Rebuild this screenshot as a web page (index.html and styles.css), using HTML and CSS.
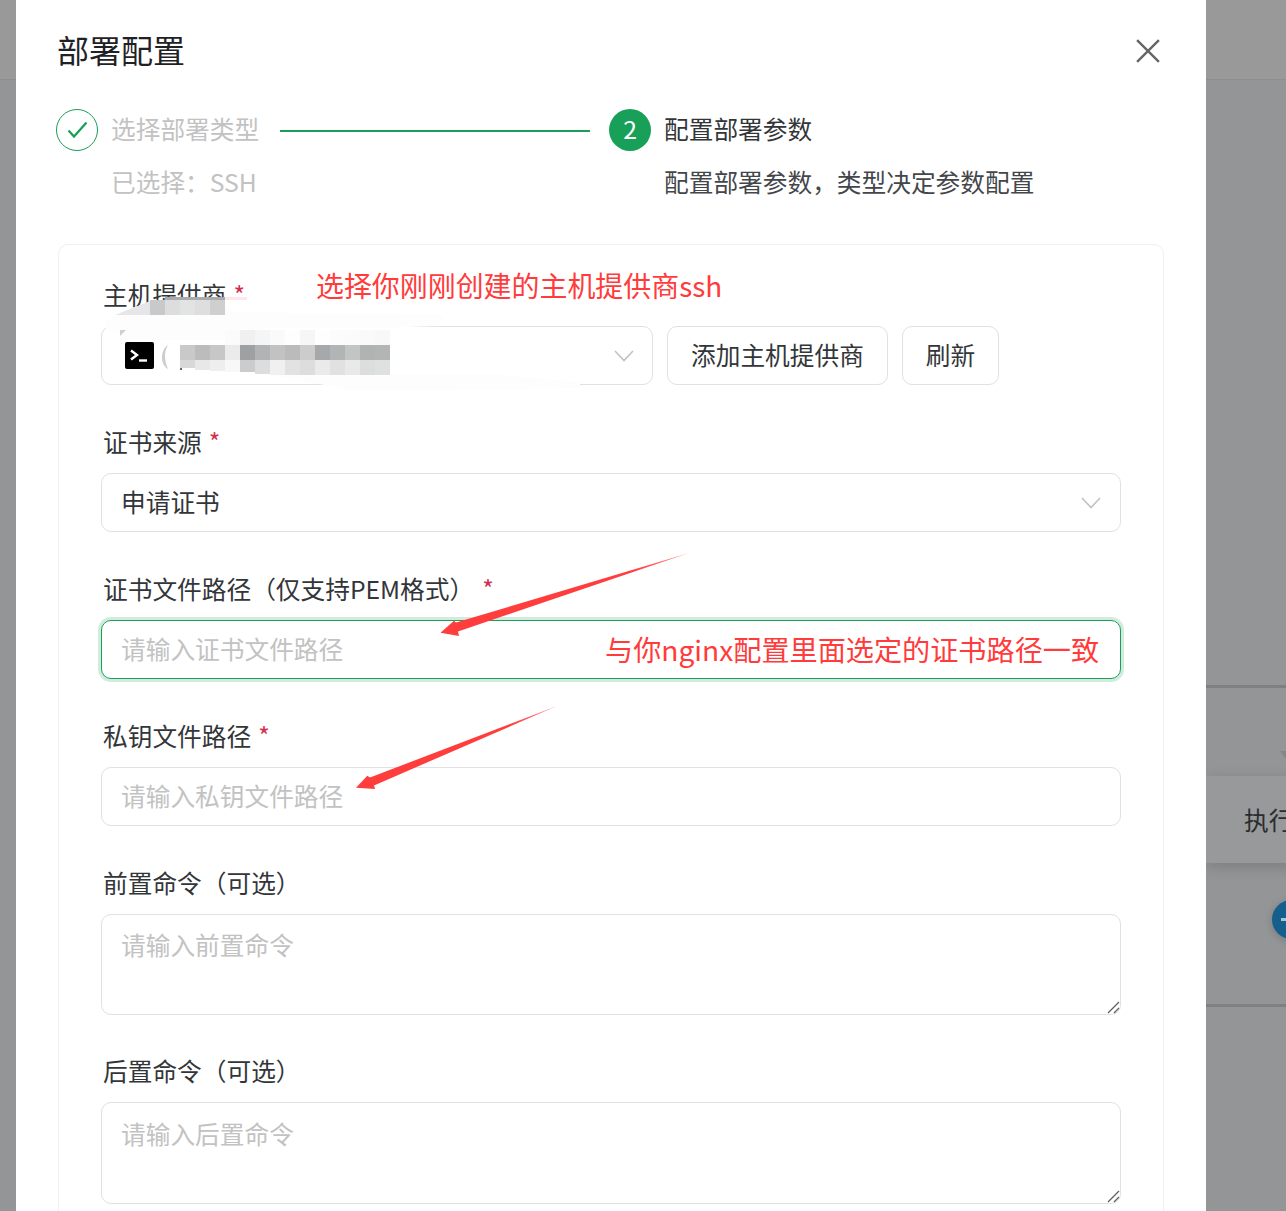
FILE: index.html
```html
<!DOCTYPE html>
<html lang="zh-CN">
<head>
<meta charset="utf-8">
<title>部署配置</title>
<link rel="stylesheet" href="styles.css">
</head>
<body>
<div class="stage">
  <div class="gutter"><div class="page-head"></div></div>

  <main class="modal">
    <header class="modal-head">
      <h1 class="modal-title">部署配置</h1>
      <svg class="close-icon" viewBox="0 0 22 22" aria-hidden="true"><path d="M1 1 21 21M21 1 1 21"/></svg>
    </header>

    <div class="steps">
      <section class="step step-done">
        <span class="step-dot step-dot-done">
          <svg viewBox="0 0 24 24" aria-hidden="true"><path d="M3.5 12.5 9 18.5 21.5 4.5"/></svg>
        </span>
        <div class="step-body">
          <div class="step-title-row">
            <span class="step-title">选择部署类型</span>
            <span class="step-line"></span>
          </div>
          <p class="step-desc">已选择：SSH</p>
        </div>
      </section>
      <section class="step step-current">
        <span class="step-dot step-dot-current">2</span>
        <div class="step-body">
          <div class="step-title-row"><span class="step-title">配置部署参数</span></div>
          <p class="step-desc">配置部署参数，类型决定参数配置</p>
        </div>
      </section>
    </div>

    <form class="form-card">
      <div class="field">
        <label class="field-label">主机提供商<span class="req">*</span></label>
        <div class="field-row">
          <div class="select select-provider">
            <svg class="term-icon" viewBox="0 0 29 27" aria-hidden="true"><rect width="29" height="27" rx="2" fill="#000"/><path d="M6 8.5 12 13 6 17.5" fill="none" stroke="#fff" stroke-width="2.4"/><path d="M14 18.5h8" stroke="#fff" stroke-width="2.4"/></svg>
            <svg class="chevron" viewBox="0 0 20 12" aria-hidden="true"><path d="M1 1 10 10.5 19 1"/></svg>
          </div>
          <button type="button" class="btn">添加主机提供商</button>
          <button type="button" class="btn">刷新</button>
        </div>
      </div>

      <div class="field">
        <label class="field-label">证书来源<span class="req">*</span></label>
        <div class="select">
          <span class="select-value">申请证书</span>
          <svg class="chevron" viewBox="0 0 20 12" aria-hidden="true"><path d="M1 1 10 10.5 19 1"/></svg>
        </div>
      </div>

      <div class="field">
        <label class="field-label">证书文件路径（仅支持PEM格式）<span class="req req-wide">*</span></label>
        <input class="input is-focus" placeholder="请输入证书文件路径">
      </div>

      <div class="field">
        <label class="field-label">私钥文件路径<span class="req">*</span></label>
        <input class="input" placeholder="请输入私钥文件路径">
      </div>

      <div class="field field-area">
        <label class="field-label">前置命令（可选）</label>
        <div class="area-box">
          <textarea class="input textarea" placeholder="请输入前置命令"></textarea>
          <svg class="grip" viewBox="0 0 13 13" aria-hidden="true"><path d="M1 12 12 1M7 12 12 7"/></svg>
        </div>
      </div>

      <div class="field field-area">
        <label class="field-label">后置命令（可选）</label>
        <div class="area-box">
          <textarea class="input textarea textarea-tall" placeholder="请输入后置命令"></textarea>
          <svg class="grip" viewBox="0 0 13 13" aria-hidden="true"><path d="M1 12 12 1M7 12 12 7"/></svg>
        </div>
      </div>
    </form>
  </main>

  <aside class="side">
    <div class="page-head"></div>
    <div class="side-rule side-rule-a"></div>
    <div class="side-caret"></div>
    <div class="side-card">执行</div>
    <div class="side-fab"><span class="side-fab-minus"></span></div>
    <div class="side-rule side-rule-b"></div>
  </aside>

  <svg class="markup" viewBox="0 0 1286 1211" aria-hidden="true">
    <defs>
      <linearGradient id="arrowA" gradientUnits="userSpaceOnUse" x1="689" y1="553" x2="630" y2="571">
        <stop offset="0" stop-color="#ff3d3d" stop-opacity=".6"/><stop offset="1" stop-color="#ff3d3d"/>
      </linearGradient>
      <linearGradient id="arrowB" gradientUnits="userSpaceOnUse" x1="557" y1="706" x2="510" y2="728">
        <stop offset="0" stop-color="#ff3d3d" stop-opacity=".6"/><stop offset="1" stop-color="#ff3d3d"/>
      </linearGradient>
    </defs>

    <polygon fill="#fdfdfd" points="107,320 150,302 225,302 232,312 445,315 438,326 382,328 313,328 263,328 180,328 118,332 106,330"/>
    <polygon fill="#fdfdfd" points="120,326 263,326 263,340 120,340"/>
    <polygon fill="#fdfdfd" points="270,375 500,375 580,382 580,388 350,391 336,387"/>
    <polygon fill="#e6e6e8" points="115,315 150,301 150,315"/>
    <polygon fill="#cfcfcf" points="120,330 126,330 120,336"/>
    <rect x="225" y="297" width="22" height="3" fill="#fbe8ec"/>
    <rect x="165" y="297" width="60" height="3" fill="#a9aaac"/>
    <rect x="150" y="300" width="15" height="15" fill="#c8c9cb"/>
    <rect x="165" y="300" width="15" height="15" fill="#dddddd"/>
    <rect x="180" y="300" width="15" height="15" fill="#e2e3e3"/>
    <rect x="195" y="300" width="15" height="15" fill="#dedede"/>
    <rect x="210" y="300" width="15" height="15" fill="#cfcfcf"/>

    <path fill="#cdcdcd" d="M168 345C160 350 160 365 168 369 164 360 164 352 168 345Z"/>
    <rect x="180" y="368" width="2" height="2" fill="#666"/>

    <rect x="225" y="330" width="15" height="15" fill="#fbfbfb"/>
    <rect x="240" y="330" width="15" height="15" fill="#f0f0f0"/>
    <rect x="255" y="330" width="15" height="15" fill="#f4f5f4"/>
    <rect x="270" y="330" width="15" height="15" fill="#fafafa"/>
    <rect x="285" y="330" width="15" height="15" fill="#fefefe"/>
    <rect x="300" y="330" width="15" height="15" fill="#f6f6f6"/>
    <rect x="315" y="330" width="15" height="15" fill="#fefefe"/>
    <rect x="330" y="330" width="15" height="15" fill="#fcfcfc"/>
    <rect x="345" y="330" width="15" height="15" fill="#fbfbfb"/>
    <rect x="360" y="330" width="15" height="15" fill="#fafafa"/>
    <rect x="375" y="330" width="15" height="15" fill="#f8f8f8"/>

    <rect x="180" y="345" width="15" height="15" fill="#c9c9c9"/>
    <rect x="195" y="345" width="15" height="15" fill="#bcbcbc"/>
    <rect x="210" y="345" width="15" height="15" fill="#c6c7c6"/>
    <rect x="225" y="345" width="15" height="15" fill="#ebebeb"/>
    <rect x="240" y="345" width="15" height="15" fill="#9fa0a1"/>
    <rect x="255" y="345" width="15" height="15" fill="#b2b3b4"/>
    <rect x="270" y="345" width="15" height="15" fill="#c2c2c2"/>
    <rect x="285" y="345" width="15" height="15" fill="#bbbbbc"/>
    <rect x="300" y="345" width="15" height="15" fill="#cccccc"/>
    <rect x="315" y="345" width="15" height="15" fill="#a7a8a9"/>
    <rect x="330" y="345" width="15" height="15" fill="#b3b4b5"/>
    <rect x="345" y="345" width="15" height="15" fill="#c3c5c4"/>
    <rect x="360" y="345" width="15" height="15" fill="#b1b2b3"/>
    <rect x="375" y="345" width="15" height="15" fill="#b3b4b4"/>

    <rect x="180" y="360" width="15" height="8" fill="#d8d8d8"/>
    <rect x="195" y="360" width="15" height="10" fill="#e8e8e8"/>
    <rect x="210" y="360" width="15" height="11" fill="#eeeeee"/>
    <rect x="225" y="360" width="15" height="12" fill="#f8f8f8"/>
    <rect x="240" y="360" width="15" height="12" fill="#cbccce"/>
    <rect x="255" y="360" width="15" height="14" fill="#dcdedd"/>
    <rect x="270" y="360" width="15" height="15" fill="#f0f0f0"/>
    <rect x="285" y="360" width="15" height="15" fill="#e2e2e2"/>
    <rect x="300" y="360" width="15" height="15" fill="#dddddd"/>
    <rect x="315" y="360" width="15" height="15" fill="#eaeaea"/>
    <rect x="330" y="360" width="15" height="15" fill="#e1e1e1"/>
    <rect x="345" y="360" width="15" height="15" fill="#e9e9e9"/>
    <rect x="360" y="360" width="15" height="15" fill="#dcdedd"/>
    <rect x="375" y="360" width="15" height="15" fill="#dfe1e0"/>

    <polygon fill="url(#arrowA)" points="689,553 456,622.5 454,620.7 440.5,632.7 459,636 458,631.5"/>
    <polygon fill="url(#arrowB)" points="557,706 370,777.5 367.3,775.7 356,787.7 375,789 374,785.5"/>
  </svg>

  <p class="note note-provider">选择你刚刚创建的主机提供商ssh</p>
  <p class="note note-path">与你nginx配置里面选定的证书路径一致</p>
</div>
</body>
</html>
```
FILE: styles.css
```css
* { box-sizing: border-box; }

html, body {
  margin: 0;
  height: 100%;
  overflow: hidden;
}

body {
  font-family: "Noto Sans CJK SC", "Noto Sans", sans-serif;
  font-size: 24.7px;
  color: #333639;
  background: #949596;
}

.stage {
  position: relative;
  display: flex;
  width: 1286px;
  height: 1211px;
  overflow: hidden;
}

/* page behind the dialog */
.gutter { flex: 0 0 16px; }

.page-head {
  height: 80px;
  background: #99999a;
  border-bottom: 1px solid #8d8e8f;
}

.side {
  flex: 0 0 80px;
  display: flex;
  flex-direction: column;
  min-width: 0;
  overflow: hidden;
}

.side-rule {
  flex: none;
  height: 3px;
  background: #7f8081;
}
.side-rule-a { margin-top: 605px; }
.side-rule-b { margin-top: 65px; }

.side-caret {
  flex: none;
  width: 0;
  height: 0;
  margin: 63px 0 0 74px;
  border-left: 6px solid transparent;
  border-right: 6px solid transparent;
  border-top: 8px solid #858687;
}

.side-card {
  flex: none;
  width: 140px;
  height: 87px;
  margin-top: 17px;
  padding-left: 38px;
  line-height: 87px;
  white-space: nowrap;
  color: #2b2c2e;
  background: #98999a;
  box-shadow: 0 4px 14px rgba(0, 0, 0, .16);
}

.side-fab {
  flex: none;
  display: flex;
  align-items: center;
  width: 39px;
  height: 39px;
  margin: 37px 0 0 66px;
  padding-left: 9px;
  border-radius: 50%;
  background: #155f8c;
  box-shadow: 0 2px 8px rgba(0, 0, 0, .18);
}
.side-fab-minus {
  display: block;
  width: 14px;
  height: 3px;
  background: #a9c3d3;
}

/* dialog */
.modal {
  flex: 0 0 1190px;
  padding: 29px 42px 0;
  background: #fff;
}

.modal-head {
  display: flex;
  justify-content: space-between;
  align-items: center;
  height: 44px;
}

.modal-title {
  margin: 0 0 4px -1px;
  font-size: 32px;
  font-weight: 400;
  line-height: 40px;
  color: #1f2225;
}

.close-icon {
  width: 24px;
  height: 24px;
  margin-right: 4px;
  fill: none;
  stroke: #666;
  stroke-width: 2.2;
}

/* steps */
.steps {
  display: flex;
  margin: 36px 0 0 -2px;
}

.step { display: flex; gap: 13px; }
.step-done { flex: 0 0 553px; padding-right: 19px; }
.step-current { flex: 1; }

.step-dot {
  flex: none;
  display: flex;
  align-items: center;
  justify-content: center;
  width: 42px;
  height: 42px;
  border-radius: 50%;
}
.step-dot-done {
  border: 1.5px solid #18a058;
}
.step-dot-done svg {
  width: 24px;
  height: 24px;
  fill: none;
  stroke: #18a058;
  stroke-width: 2.2;
}
.step-dot-current {
  padding-bottom: 4px;
  color: #fff;
  background: #18a058;
}

.step-body { flex: 1; }

.step-title-row {
  display: flex;
  align-items: center;
  height: 42px;
}
.step-title {
  margin-bottom: 4px;
  white-space: nowrap;
}
.step-line {
  flex: 1;
  height: 2px;
  margin: 2px 0 0 21px;
  background: #18a058;
}
.step-desc {
  margin: 11px 0 0;
  line-height: 38px;
}
.step-done .step-title,
.step-done .step-desc { color: #c2c2c2; }
.step-current .step-desc { color: #43464a; }

/* form */
.form-card {
  margin-top: 44px;
  padding: 29px 42px 0;
  height: 1000px;
  border: 1px solid #efeff5;
  border-radius: 10px;
}

.field { margin-bottom: 36px; }
.field-area { margin-bottom: 35px; }

.field-label {
  display: block;
  height: 44px;
  margin-bottom: 8px;
  padding-left: 2px;
  line-height: 40px;
  color: #333639;
}

.req {
  margin-left: 7px;
  color: #d03050;
}
.req-wide { margin-left: 8px; }

.field-row {
  display: flex;
  gap: 14px;
}

.select,
.input,
.btn {
  height: 59px;
  border: 1px solid #e0e0e6;
  border-radius: 10px;
  background: #fff;
  font: inherit;
  color: #333639;
}

.select {
  display: flex;
  align-items: center;
  justify-content: space-between;
  padding: 0 19px;
}
.select-value { margin-bottom: 4px; }
.select-provider {
  flex: 0 0 552px;
  padding: 0 18px 0 23px;
}

.term-icon {
  width: 29px;
  height: 27px;
}

.chevron {
  width: 20px;
  height: 12px;
  fill: none;
  stroke: #c2c2c2;
  stroke-width: 1.6;
}

.btn {
  padding: 0 23px 4px;
  white-space: nowrap;
}

.input {
  display: block;
  width: 100%;
  padding: 0 19px 4px;
  outline: none;
}
.input::placeholder {
  color: #c2c2c2;
  opacity: 1;
}
.input.is-focus {
  border-color: #18a058;
  box-shadow: 0 0 0 3px rgba(24, 160, 88, .2);
}

.area-box { position: relative; }

.textarea {
  height: 101px;
  padding-top: 11px;
  line-height: 37px;
  resize: none;
}
.textarea-tall {
  height: 102px;
  padding-top: 12px;
}

.grip {
  position: absolute;
  right: 1px;
  bottom: 1px;
  width: 13px;
  height: 13px;
  fill: none;
  stroke: #5f6062;
  stroke-width: 1.3;
}

/* screenshot markup drawn on top */
.markup {
  position: absolute;
  top: 0;
  left: 0;
  width: 1286px;
  height: 1211px;
  pointer-events: none;
}

.note {
  position: absolute;
  margin: 0;
  font-size: 28.15px;
  line-height: 40px;
  color: #ff3b3b;
  white-space: nowrap;
}
.note-provider { left: 316px; top: 265px; font-size: 27.95px; }
.note-path { left: 605px; top: 629px; }
```
